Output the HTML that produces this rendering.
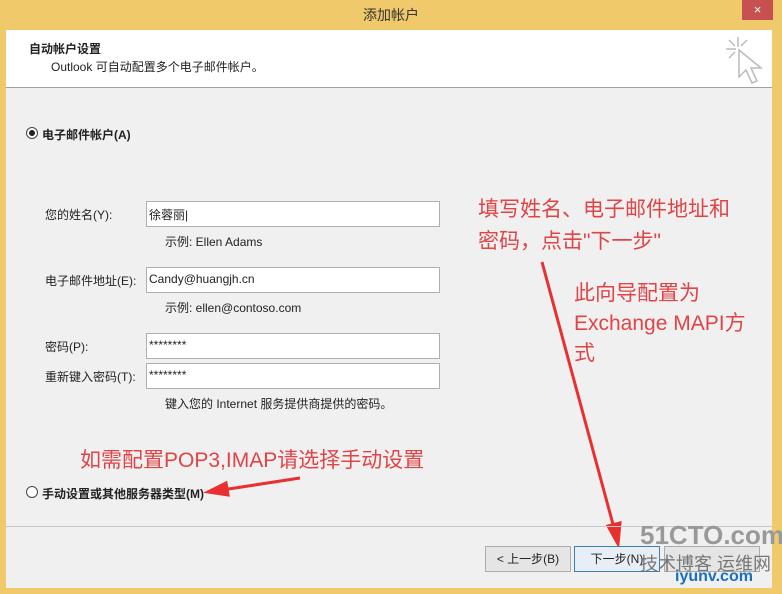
<!DOCTYPE html>
<html><head><meta charset="utf-8"><style>
*{margin:0;padding:0;box-sizing:border-box}
body{width:782px;height:594px;background:#f0c96a;position:relative;overflow:hidden;font-family:"Liberation Sans","Noto Sans CJK SC",sans-serif;font-size:12px;color:#222}
.a{position:absolute}
.title{left:0;top:0;width:782px;height:30px;text-align:center;line-height:30px;font-size:14px;color:#333}
.close{left:742px;top:0;width:31px;height:20px;background:#c75050;color:#fff;text-align:center;line-height:19px;font-size:13px}
.win{left:6px;top:30px;width:766px;height:558px;background:#f0f0f0}
.hdr{left:6px;top:30px;width:766px;height:58px;background:#fff;border-bottom:1px solid #a0a0a0}
.inp{background:#fff;border:1px solid #b0b0b0;width:294px;height:26px;padding:4px 2px;font-size:12px}
.red{color:#e04446;font-size:21px;font-family:"Liberation Sans","Noto Sans CJK SC",sans-serif}
.btn{height:26px;border:1px solid #acacac;background:#e5e5e5;text-align:center;line-height:24px;font-size:12px}
.radio{width:12px;height:12px;border:1px solid #444;border-radius:50%;background:#fff}
</style></head><body>
<div class="a title">添加帐户</div>
<div class="a close">×</div>
<div class="a win"></div>
<div class="a hdr"></div>
<div class="a" style="left:29px;top:40px;font-weight:bold">自动帐户设置</div>
<div class="a" style="left:51px;top:58px">Outlook 可自动配置多个电子邮件帐户。</div>
<svg class="a" style="left:724px;top:35px" width="40" height="50" viewBox="0 0 40 50"><g stroke="#bbb" stroke-width="1.5" fill="none"><path d="M14 2v10M2 14h10M5 5l6 6M23 5l-6 6M5 23l6-6"/><path d="M15 15v27l7-7 6 13 5-2-6-13h10z" fill="#fff"/></g></svg>
<div class="a radio" style="left:26px;top:127px"><div style="width:6px;height:6px;background:#222;border-radius:50%;margin:2px"></div></div>
<div class="a" style="left:42px;top:126px;font-weight:bold">电子邮件帐户(A)</div>
<div class="a" style="left:45px;top:206px">您的姓名(Y):</div>
<div class="a inp" style="left:146px;top:201px">徐蓉丽|</div>
<div class="a" style="left:165px;top:233px">示例: Ellen Adams</div>
<div class="a" style="left:45px;top:272px">电子邮件地址(E):</div>
<div class="a inp" style="left:146px;top:267px">Candy@huangjh.cn</div>
<div class="a" style="left:165px;top:299px">示例: ellen@contoso.com</div>
<div class="a" style="left:45px;top:338px">密码(P):</div>
<div class="a inp" style="left:146px;top:333px">********</div>
<div class="a" style="left:45px;top:368px">重新键入密码(T):</div>
<div class="a inp" style="left:146px;top:363px">********</div>
<div class="a" style="left:165px;top:395px">键入您的 Internet 服务提供商提供的密码。</div>
<div class="a radio" style="left:26px;top:486px"></div>
<div class="a" style="left:42px;top:485px;font-weight:bold">手动设置或其他服务器类型(M)</div>
<div class="a red" style="left:80px;top:444px">如需配置POP3,IMAP请选择手动设置</div>
<div class="a red" style="left:478px;top:194px;line-height:32px">填写姓名、电子邮件地址和<br>密码，点击"下一步"</div>
<div class="a red" style="left:574px;top:279px;line-height:30px">此向导配置为<br>Exchange MAPI方<br>式</div>
<svg class="a" style="left:0;top:0" width="782" height="594"><g stroke="#e83030" stroke-width="3" fill="#e83030"><line x1="300" y1="478" x2="222" y2="490"/><path d="M208 492l18-9 2 12z"/><line x1="542" y1="262" x2="614" y2="528"/><path d="M618 544l-10-18 12-3z"/></g></svg>
<div class="a" style="left:6px;top:526px;width:766px;border-top:1px solid #c8c8c8"></div>
<div class="a btn" style="left:485px;top:546px;width:86px">&lt; 上一步(B)</div>
<div class="a btn" style="left:574px;top:546px;width:86px;border-color:#3c7fb1;background:#e8eef5">下一步(N)</div>
<div class="a btn" style="left:664px;top:546px;width:96px"></div>
<div class="a" style="left:640px;top:520px;font-size:26px;font-weight:bold;color:#999">51CTO.com</div>
<div class="a" style="left:640px;top:550px;font-size:18px;color:#777">技术博客 运维网</div>
<div class="a" style="left:675px;top:568px;font-size:16px;font-weight:bold;color:#1a6fc0">iyunv.com</div>
</body></html>
